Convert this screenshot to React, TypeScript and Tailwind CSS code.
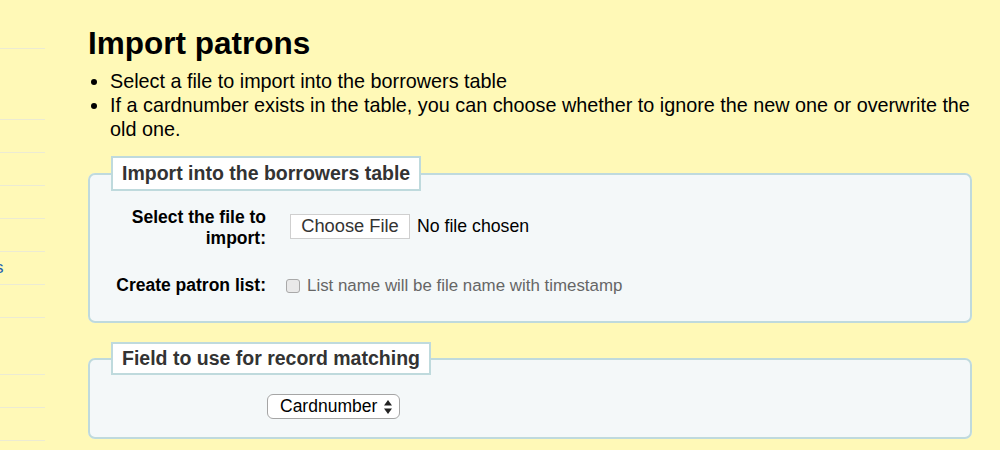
import React from 'react';

const font = { fontFamily: '"Liberation Sans", Arial, Helvetica, sans-serif' };

const sideRows = [
  'h-[49px]',
  'h-[71px]',
  'h-[33px]',
  'h-[33px]',
  'h-[33px]',
  'h-[33px]',
  'h-[33px]',
  'h-[33px]',
  'h-[57px]',
  'h-[33px]',
  'h-[33px]',
];

const Sidebar: React.FC = () => (
  <div className="w-[45px] shrink-0 overflow-hidden">
    {sideRows.map((h, i) => (
      <div key={i} className={`${h} border-b border-[#ecebd3] flex items-center`}>
        {i === 6 && <span className="ml-[-5px] text-[17px] text-[#1d5fb0]">s</span>}
      </div>
    ))}
  </div>
);

export default function App() {
  return (
    <div className="w-[1000px] h-[450px] overflow-hidden bg-[#fff9b7] flex" style={font}>
      <Sidebar />
      <div className="ml-[43px] w-[884px]">
        <h1 className="mt-[24px] text-[31.5px] leading-[38px] font-bold text-black">Import patrons</h1>
        <ul className="mt-[7px] list-disc pl-[22px] text-[19.8px] leading-[24px] text-black">
          <li>Select a file to import into the borrowers table</li>
          <li>If a cardnumber exists in the table, you can choose whether to ignore the new one or overwrite the old one.</li>
        </ul>

        <fieldset className="mt-[15px] border-2 border-[#bfdadd] rounded-[7px] bg-[#f4f8f9] pl-[21px] pr-4 pb-[23px]">
          <legend className="bg-white border-2 border-[#bfdadd] px-[9px] py-[5px] text-[19.5px] leading-[21px] font-bold text-[#333]">
            Import into the borrowers table
          </legend>
          <div className="pt-[16px] flex items-start">
            <label className="w-[155px] text-right text-[17.5px] leading-[21px] font-bold text-black">
              Select the file to import:
            </label>
            <div className="ml-[24px] mt-[6px] flex items-center">
              <button className="h-[25px] w-[120px] bg-white border border-[#cfcfcf] text-[18.3px] text-[#333] leading-none">
                Choose File
              </button>
              <span className="ml-[7px] text-[17.7px] text-black">No file chosen</span>
            </div>
          </div>
          <div className="mt-[24px] flex items-center">
            <label className="w-[155px] text-right text-[17.5px] leading-[21px] font-bold text-black">
              Create patron list:
            </label>
            <span className="ml-[20px] w-[14px] h-[14px] rounded-[3px] border border-[#a9a9a9] bg-[#e9e9e9]" />
            <span className="ml-[7px] text-[16.9px] text-[#666]">List name will be file name with timestamp</span>
          </div>
        </fieldset>

        <fieldset className="mt-[19px] border-2 border-[#bfdadd] rounded-[7px] bg-[#f4f8f9] pl-[21px] pr-4 pb-[18px]">
          <legend className="bg-white border-2 border-[#bfdadd] px-[9px] py-[4px] text-[19.5px] leading-[21px] font-bold text-[#333]">
            Field to use for record matching
          </legend>
          <div className="pt-[19px] flex">
            <div className="ml-[156px] h-[25px] w-[133px] rounded-[6px] border border-[#a5a5a5] bg-white flex items-center pl-[12px] pr-[6px] justify-between">
              <span className="text-[17.5px] text-black leading-none">Cardnumber</span>
              <svg width="10" height="16" viewBox="0 0 10 16">
                <path d="M5 1 L9 6.5 H1 Z" fill="#222" />
                <path d="M5 15 L9 9.5 H1 Z" fill="#222" />
              </svg>
            </div>
          </div>
        </fieldset>
      </div>
    </div>
  );
}
